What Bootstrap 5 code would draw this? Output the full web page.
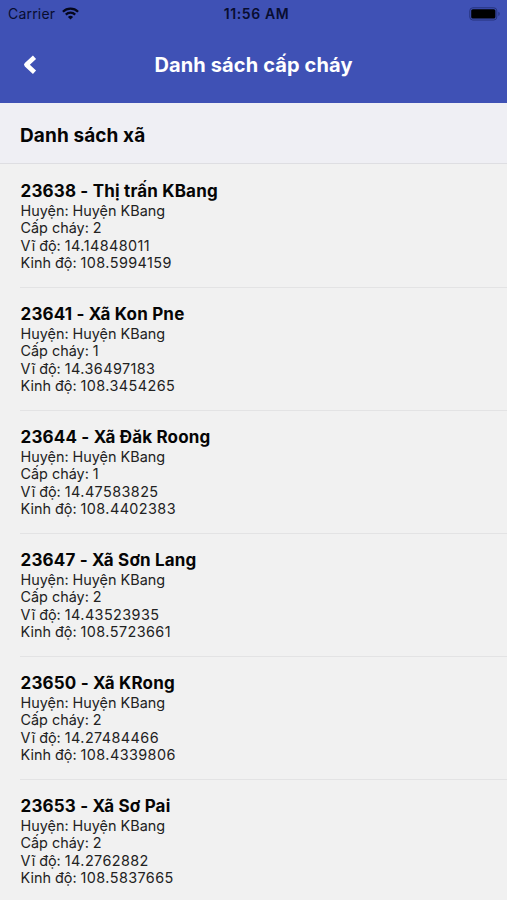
<!DOCTYPE html>
<html lang="vi">
<head>
<meta charset="utf-8">
<meta name="viewport" content="width=device-width, initial-scale=1">
<title>Danh sách cấp cháy</title>
<link href="https://cdn.jsdelivr.net/npm/bootstrap@5.3.0/dist/css/bootstrap.min.css" rel="stylesheet">
<style>
body{font-family:Inter,"Liberation Sans",sans-serif;background:#f1f1f1;color:#050505;height:900px;overflow:hidden}
.app-header{height:103px;background:#3f51b5}
.status-bar{height:27px;color:#080d30;font-size:14px;line-height:27px;padding:0 6px 0 8px}
.status-side{flex:1 1 0}
.carrier{letter-spacing:.2px}
.clock{font-size:14px;letter-spacing:.6px;margin-left:4px}
.title-bar{height:76px}
.title-bar h1{font-size:20px;line-height:24px;letter-spacing:.13px;color:#fff}
.side-slot{width:60px;padding-left:22px}
.section-head{height:61px;background:#efeff4;border-bottom:1px solid #dedee2;padding:6px 20px 0}
.section-head h2{font-size:19px;line-height:24px;letter-spacing:.1px}
.commune-list{padding-top:1px}
.commune{height:123px;margin-left:20px;padding:15.5px 0 0 .5px;border-bottom:1px solid #e3e3e4}
.commune h3{font-size:17px;line-height:21px;letter-spacing:.18px}
.commune p{font-size:14.4px;line-height:17.5px;color:#222}
.commune p span{letter-spacing:.42px}
</style>
</head>
<body>
<header class="app-header">
  <div class="status-bar d-flex align-items-center">
    <div class="status-side d-flex align-items-center">
      <span class="carrier">Carrier</span>
      <svg style="margin-left:7px" width="17" height="13" viewBox="0 0 17 13" fill="none" stroke="#05071c" stroke-width="2.2" aria-hidden="true">
        <path d="M.9 4.7a10.8 10.8 0 0 1 15.2 0M3.8 7.6a6.7 6.7 0 0 1 9.4 0"/>
        <path d="M8.5 12.6 5.9 10a3.7 3.7 0 0 1 5.2 0z" fill="#05071c" stroke="none"/>
      </svg>
    </div>
    <span class="clock fw-semibold">11:56 AM</span>
    <div class="status-side d-flex justify-content-end align-items-center">
      <svg width="32" height="14" viewBox="0 0 32 14" aria-hidden="true">
        <rect x=".8" y=".8" width="27" height="12.2" rx="3" fill="none" stroke="#26337d" stroke-width="1"/>
        <rect x="2.2" y="2.2" width="24.2" height="9.4" rx="1.6" fill="#000"/>
        <path d="M29.4 4.8c1.7.6 1.7 3.6 0 4.2z" fill="#26337d"/>
      </svg>
    </div>
  </div>
  <div class="title-bar d-flex align-items-center">
    <div class="side-slot">
      <svg class="d-block" width="15" height="20" viewBox="0 0 15 20" fill="none" stroke="#fff" stroke-width="4.6" stroke-linejoin="round" aria-hidden="true"><path d="M12.5 2.2 4.4 9.7l8.1 7.5"/></svg>
    </div>
    <h1 class="flex-grow-1 text-center fw-bold mb-0">Danh sách cấp cháy</h1>
    <div class="side-slot"></div>
  </div>
</header>
<div class="section-head d-flex align-items-center"><h2 class="fw-bold mb-0">Danh sách xã</h2></div>
<main class="commune-list">
  <article class="commune"><h3 class="fw-bold mb-0">23638 - Thị trấn KBang</h3><p class="mb-0">Huyện: Huyện KBang<br>Cấp cháy: 2<br>Vĩ độ: <span>14.14848011</span><br>Kinh độ: <span>108.5994159</span></p></article>
  <article class="commune"><h3 class="fw-bold mb-0">23641 - Xã Kon Pne</h3><p class="mb-0">Huyện: Huyện KBang<br>Cấp cháy: 1<br>Vĩ độ: <span>14.36497183</span><br>Kinh độ: <span>108.3454265</span></p></article>
  <article class="commune"><h3 class="fw-bold mb-0">23644 - Xã Đăk Roong</h3><p class="mb-0">Huyện: Huyện KBang<br>Cấp cháy: 1<br>Vĩ độ: <span>14.47583825</span><br>Kinh độ: <span>108.4402383</span></p></article>
  <article class="commune"><h3 class="fw-bold mb-0">23647 - Xã Sơn Lang</h3><p class="mb-0">Huyện: Huyện KBang<br>Cấp cháy: 2<br>Vĩ độ: <span>14.43523935</span><br>Kinh độ: <span>108.5723661</span></p></article>
  <article class="commune"><h3 class="fw-bold mb-0">23650 - Xã KRong</h3><p class="mb-0">Huyện: Huyện KBang<br>Cấp cháy: 2<br>Vĩ độ: <span>14.27484466</span><br>Kinh độ: <span>108.4339806</span></p></article>
  <article class="commune"><h3 class="fw-bold mb-0">23653 - Xã Sơ Pai</h3><p class="mb-0">Huyện: Huyện KBang<br>Cấp cháy: 2<br>Vĩ độ: <span>14.2762882</span><br>Kinh độ: <span>108.5837665</span></p></article>
</main>
<script src="https://cdn.jsdelivr.net/npm/bootstrap@5.3.0/dist/js/bootstrap.bundle.min.js"></script>
</body>
</html>
